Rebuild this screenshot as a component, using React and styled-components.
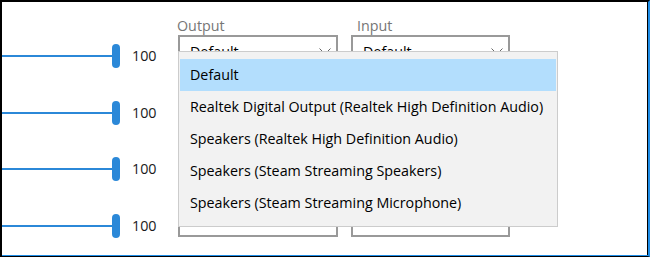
import React from "react"
import styled, { createGlobalStyle } from "styled-components"

const GlobalStyle = createGlobalStyle`
    html, body {
        margin: 0;
        padding: 0;
        background: #fff;
    }
    * {
        box-sizing: border-box;
    }
`

const Window = styled.div`
    position: relative;
    width: 650px;
    height: 257px;
    overflow: hidden;
    background: #fff;
    border-style: solid;
    border-width: 2px 2px 1px 2px;
    border-color: #000 #1f8ee8 #000 #000;
    box-shadow: inset 0 -1px 0 #1f8ee8, inset -1px 0 0 #000;
    font-family: "Open Sans", "Noto Sans", sans-serif;
    font-size: 14px;
    color: #000;
`

const Rows = styled.div`
    padding-top: 15px;
    display: flex;
    flex-direction: column;
`

const Row = styled.div`
    height: 56.67px;
    display: flex;
    align-items: flex-start;
`

/*
    SLIDER
*/

const Slider = styled.div`
    width: 118px;
    height: 24px;
    margin-top: 27px;
    display: flex;
    align-items: center;
`
const Track = styled.div`
    flex: 1;
    height: 2px;
    background: #2b88d8;
`
const Thumb = styled.div`
    width: 8px;
    height: 24px;
    border-radius: 4px;
    background: #2b88d8;
`
const Value = styled.div`
    width: 58px;
    padding-left: 12px;
    margin-top: 27px;
    line-height: 24px;
    font-size: 14.3px;
    color: #1a1a1a;
`

/*
    SELECTS
*/

const Field = styled.div`
    width: ${(p) => p.width}px;
    margin-left: ${(p) => p.gap || 0}px;
`
const Label = styled.div`
    height: 18px;
    line-height: 18px;
    margin-left: ${(p) => p.shift || 0}px;
    font-size: 14.3px;
    color: #767676;
`
const Box = styled.div`
    height: 32px;
    border: 2px solid #999;
    padding: 0 5px 0 10px;
    display: flex;
    align-items: center;
    justify-content: space-between;
    font-size: 14.3px;
    color: #000;
`

const Chevron = () => (
    <svg width="12" height="7" viewBox="0 0 12 7">
        <path d="M0.5 0.5 L6 6 L11.5 0.5" fill="none" stroke="#666" strokeWidth="1" />
    </svg>
)

/*
    DROPDOWN MENU
*/

const Menu = styled.div`
    position: absolute;
    left: 176px;
    top: 49px;
    width: 380px;
    height: 176px;
    background: #f2f2f2;
    border: 1px solid #cccccc;
    padding: 7px 1px;
`
const Item = styled.div`
    height: 32px;
    line-height: 32px;
    padding-left: 10px;
    white-space: nowrap;
    font-size: 14.3px;
    color: #000;
    background: ${(p) => (p.active ? "#b3defd" : "transparent")};
`

const devices = [
    "Default",
    "Realtek Digital Output (Realtek High Definition Audio)",
    "Speakers (Realtek High Definition Audio)",
    "Speakers (Steam Streaming Speakers)",
    "Speakers (Steam Streaming Microphone)",
]

const rows = [100, 100, 100, 100]

function App() {
    return (
        <>
            <GlobalStyle />
            <Window>
                <Rows>
                    {rows.map((v, i) => {
                        // only the first row's labels and values show; the menu hides the rest
                        const first = i === 0
                        return (
                            <Row key={i}>
                                <Slider>
                                    <Track />
                                    <Thumb />
                                </Slider>
                                <Value>{v}</Value>
                                <Field width={160}>
                                    <Label shift={-1}>{first && "Output"}</Label>
                                    <Box>
                                        {first && "Default"}
                                        {first && <Chevron />}
                                    </Box>
                                </Field>
                                <Field width={159} gap={13}>
                                    <Label shift={6}>{first && "Input"}</Label>
                                    <Box>
                                        {first && "Default"}
                                        {first && <Chevron />}
                                    </Box>
                                </Field>
                            </Row>
                        )
                    })}
                </Rows>
                <Menu>
                    {devices.map((d, i) => (
                        <Item key={d} active={i === 0}>
                            {d}
                        </Item>
                    ))}
                </Menu>
            </Window>
        </>
    )
}

export default App
